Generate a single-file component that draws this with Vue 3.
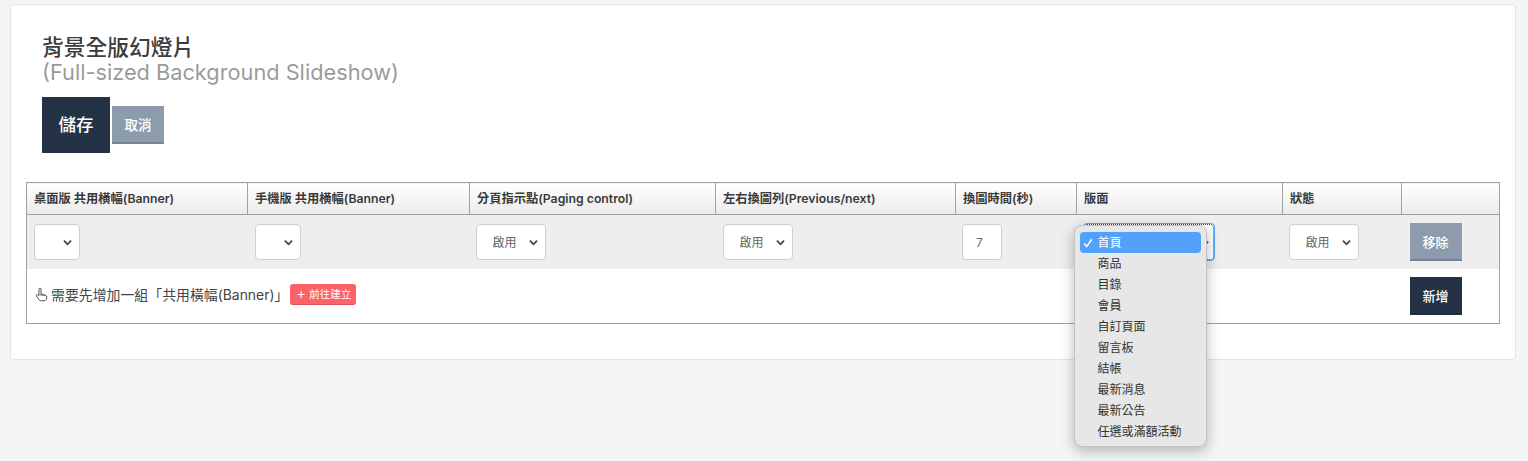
<script setup>
const columns = [
  { label: '桌面版 共用橫幅(Banner)', width: 221 },
  { label: '手機版 共用橫幅(Banner)', width: 222 },
  { label: '分頁指示點(Paging control)', width: 246 },
  { label: '左右換圖列(Previous/next)', width: 240 },
  { label: '換圖時間(秒)', width: 121 },
  { label: '版面', width: 206 },
  { label: '狀態', width: 119 },
  { label: '', width: 98 },
]
const layouts = ['首頁', '商品', '目錄', '會員', '自訂頁面', '留言板', '結帳', '最新消息', '最新公告', '任選或滿額活動']
</script>

<template>
  <div class="page">
    <section class="card">
      <h1 class="title">背景全版幻燈片<small>(Full-sized Background Slideshow)</small></h1>
      <div class="actions">
        <button class="btn btn-save">儲存</button>
        <button class="btn btn-cancel">取消</button>
      </div>
      <table class="grid">
        <colgroup>
          <col v-for="c in columns" :key="c.label" :style="{ width: c.width + 'px' }" />
        </colgroup>
        <thead>
          <tr>
            <th v-for="c in columns" :key="c.label">{{ c.label }}</th>
          </tr>
        </thead>
        <tbody>
          <tr class="row">
            <td>
              <div class="select narrow">
                <select><option></option></select>
                <svg class="chev" viewBox="0 0 10 7"><path d="M1 1.500l4 4 4-4" /></svg>
              </div>
            </td>
            <td>
              <div class="select narrow">
                <select><option></option></select>
                <svg class="chev" viewBox="0 0 10 7"><path d="M1 1.500l4 4 4-4" /></svg>
              </div>
            </td>
            <td class="tight">
              <div class="select medium">
                <select><option>啟用</option></select>
                <svg class="chev" viewBox="0 0 10 7"><path d="M1 1.500l4 4 4-4" /></svg>
              </div>
            </td>
            <td>
              <div class="select medium">
                <select><option>啟用</option></select>
                <svg class="chev" viewBox="0 0 10 7"><path d="M1 1.500l4 4 4-4" /></svg>
              </div>
            </td>
            <td class="tight"><input class="num" value="7" /></td>
            <td class="layout-cell">
              <div class="select focused">
                <svg class="chev" viewBox="0 0 10 7"><path d="M1 1.500l4 4 4-4" /></svg>
              </div>
              <ul class="menu">
                <li v-for="(l, i) in layouts" :key="l" :class="{ active: i === 0 }">
                  <svg v-if="i === 0" class="tick" viewBox="0 0 10 10"><path d="M1.200 5.600l2.500 3L8.800 1.200" /></svg>
                  {{ l }}
                </li>
              </ul>
            </td>
            <td class="tight">
              <div class="select medium">
                <select><option>啟用</option></select>
                <svg class="chev" viewBox="0 0 10 7"><path d="M1 1.500l4 4 4-4" /></svg>
              </div>
            </td>
            <td class="tight"><button class="btn btn-row btn-remove">移除</button></td>
          </tr>
          <tr class="foot">
            <td colspan="7">
              <div class="hint">
                <svg class="hand" viewBox="0 0 14 16">
                  <path d="M4.300 9.200V2.400a1.100 1.100 0 0 1 2.200 0v5l5 1.500c.9.300 1.300 1 1.200 1.900l-.4 2.200c-.2 1-1 1.700-2 1.700H6.200c-.7 0-1.300-.3-1.700-.9L1.500 9.600c-.7-1 .6-2.100 1.500-1.300z" />
                  <path d="M6.500 7.400v2M8.500 8v1.500M10.500 8.600v1.200" />
                </svg>
                <span>需要先增加一組「共用橫幅(Banner)」</span>
                <a class="tag"><span class="plus">+</span>前往建立</a>
              </div>
            </td>
            <td class="tight"><button class="btn btn-row btn-add">新增</button></td>
          </tr>
        </tbody>
      </table>
    </section>
  </div>
</template>

<style>
html, body { margin: 0; background: #f4f5f7; }
</style>

<style scoped>
.page {
  height: 461px;
  padding: 4px 12px 0 10px;
  box-sizing: border-box;
  overflow: hidden;
  font-family: Inter, "Noto Sans CJK TC", sans-serif;
  color: #3a3a3a;
}
.card {
  height: 356px;
  box-sizing: border-box;
  background: #fff;
  border: 1px solid #e2e4e7;
  border-radius: 4px;
  padding: 30px 15px 0;
}
.title {
  margin: 0 0 0 16px;
  font-size: 21.750px;
  line-height: 25px;
  font-weight: 500;
  color: #3c3c3c;
}
.title small {
  display: block;
  font-size: 21.750px;
  font-weight: 400;
  color: #9b9b9b;
}
.actions {
  display: flex;
  align-items: center;
  gap: 2px;
  margin: 12px 0 0 16px;
}
.btn {
  border: 0;
  padding: 0;
  font-family: inherit;
  color: #fff;
  display: block;
}
.btn-save {
  width: 68px;
  height: 56px;
  padding-bottom: 3px;
  background: #233345;
  font-size: 17.500px;
  font-weight: 500;
}
.btn-cancel {
  width: 52px;
  height: 38px;
  background: #8d9cad;
  border-bottom: 2px solid #758392;
  font-size: 13.500px;
  font-weight: 500;
}
.grid {
  margin-top: 29px;
  width: 1474px;
  table-layout: fixed;
  border-collapse: collapse;
  border: 1px solid #a0a0a0;
}
th {
  height: 32px;
  padding: 0 0 2px 7px;
  box-sizing: border-box;
  text-align: left;
  font-size: 12.250px;
  font-weight: 600;
  color: #3a3a3a;
  background: linear-gradient(#ffffff, #ebebeb);
  border: 1px solid #a0a0a0;
}
.row td {
  height: 54px;
  padding: 0 0 0 7px;
  background: #eeeeee;
  vertical-align: middle;
}
.row td.tight, .foot td.tight {
  padding-left: 6px;
}
.foot td {
  height: 54px;
  padding: 0 0 0 7px;
  background: #fff;
  vertical-align: middle;
}
.select {
  position: relative;
  height: 36px;
  box-sizing: border-box;
}
.select select {
  appearance: none;
  width: 100%;
  height: 100%;
  box-sizing: border-box;
  background: #fff;
  border: 1px solid #cfcfcf;
  border-radius: 4px;
  padding: 0 0 0 16px;
  margin: 0;
  font-family: inherit;
  font-size: 12px;
  color: #666;
  display: block;
}
.narrow { width: 46px; }
.medium { width: 70px; }
.chev {
  position: absolute;
  right: 8px;
  top: 15px;
  width: 9px;
  height: 7px;
  fill: none;
  stroke: #444;
  stroke-width: 2;
  pointer-events: none;
}
.focused .chev {
  right: 4px;
}
.num {
  display: block;
  width: 40px;
  height: 36px;
  box-sizing: border-box;
  text-align: center;
  border: 1px solid #cfcfcf;
  border-radius: 4px;
  background: #fff;
  font-family: inherit;
  font-size: 12px;
  color: #666;
  padding: 0 4px 0 0;
}
.layout-cell { position: relative; }
.focused {
  width: 130px;
  background: #fff;
  border: 1px dotted #444;
  outline: 1px solid #5aa5f5;
  border-radius: 3px;
}
.menu {
  position: absolute;
  left: -3px;
  top: 10px;
  z-index: 5;
  width: 133px;
  height: 222px;
  box-sizing: border-box;
  margin: 0;
  padding: 6px 5px;
  list-style: none;
  background: #e6e7e6;
  border: 1px solid #c2c2c2;
  border-radius: 8px;
  box-shadow: 0 4px 14px rgba(0, 0, 0, 0.28);
}
.menu li {
  position: relative;
  height: 21px;
  line-height: 21px;
  padding-left: 18px;
  font-size: 12px;
  color: #333;
  border-radius: 4px;
}
.menu li.active {
  background: #52a2fb;
  color: #fff;
}
.tick {
  position: absolute;
  left: 3px;
  top: 6px;
  width: 10px;
  height: 10px;
  fill: none;
  stroke: #fff;
  stroke-width: 1.500;
}
.btn-row {
  width: 52px;
  height: 38px;
  font-size: 13px;
  font-weight: 500;
  margin-left: 2px;
}
.btn-remove {
  background: #8d9cad;
  border-bottom: 2px solid #758392;
}
.btn-add {
  background: #233345;
  border-bottom: 2px solid #1e2c3b;
}
.hint {
  display: flex;
  align-items: center;
  font-size: 13.900px;
  color: #444;
  margin-top: -4px;
}
.hand {
  width: 13px;
  height: 15px;
  margin: 0 3px 0 1px;
  fill: none;
  stroke: #444;
  stroke-width: 1;
}
.tag {
  display: inline-flex;
  align-items: center;
  margin-left: 2px;
  height: 21px;
  padding: 0 5px 0 6px;
  box-sizing: border-box;
  background: #fd6268;
  border-bottom: 1px solid #dc5157;
  border-radius: 3px;
  color: #fff;
  font-size: 10.500px;
}
.plus {
  font-size: 15px;
  line-height: 1;
  font-weight: 300;
  margin-right: 3px;
}
</style>
